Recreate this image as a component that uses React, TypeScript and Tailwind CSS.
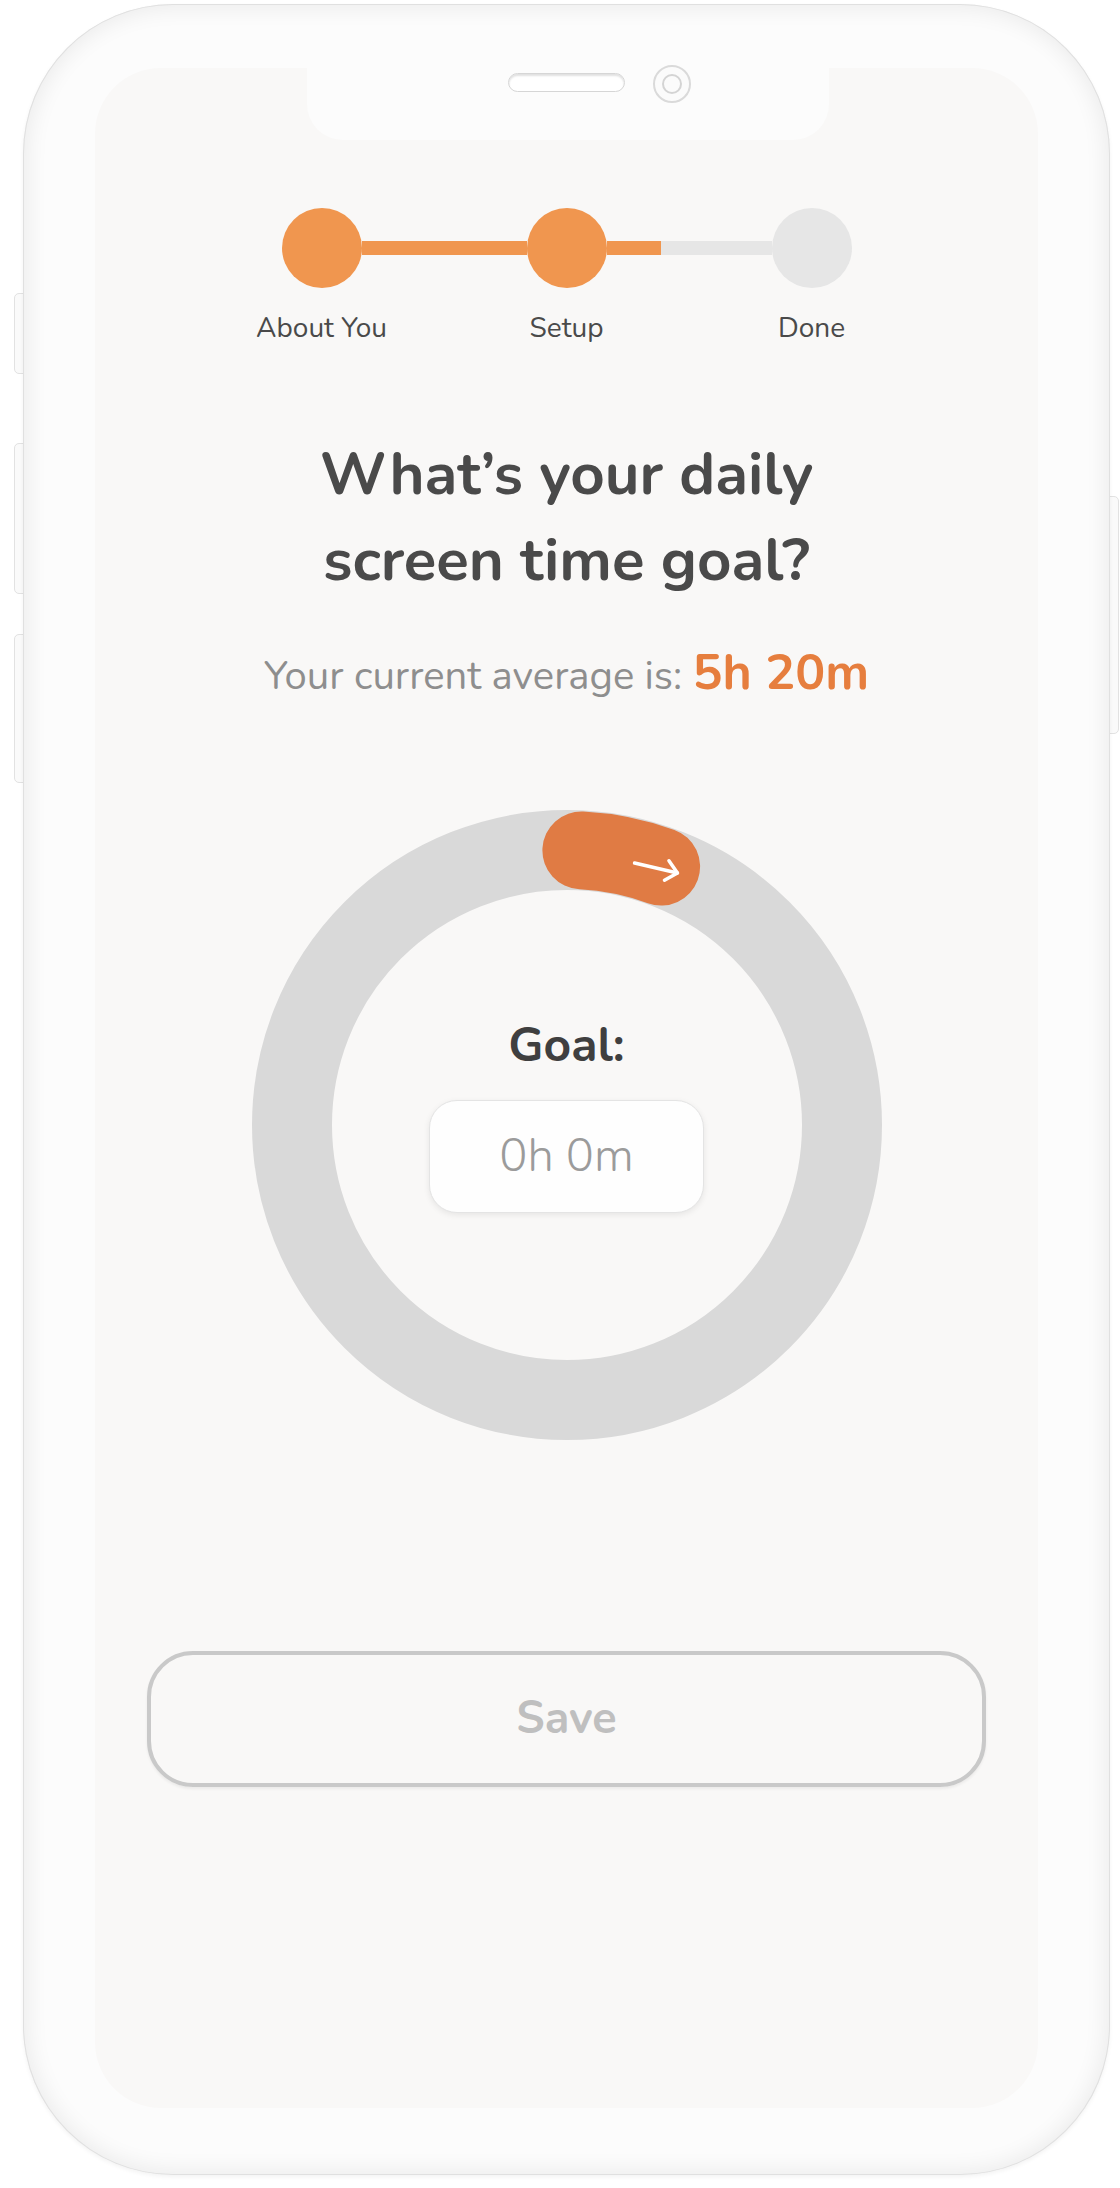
import React from "react";

const FONT = { fontFamily: '"Nunito", "Lato", "Noto Sans", sans-serif' };

function Stepper() {
  return (
    <div className="flex flex-col items-center mt-[140px]">
      <div className="flex items-center w-[570px]">
        <div className="w-[80px] h-[80px] rounded-full bg-[#f0964f] shrink-0" />
        <div className="w-[165px] h-[14px] bg-[#f0964f]" />
        <div className="w-[80px] h-[80px] rounded-full bg-[#f0964f] shrink-0" />
        <div className="w-[54px] h-[14px] bg-[#f0964f]" />
        <div className="w-[111px] h-[14px] bg-[#e6e6e6]" />
        <div className="w-[80px] h-[80px] rounded-full bg-[#e6e6e6] shrink-0" />
      </div>
      <div className="flex w-[570px] mt-[24px] text-[28px] leading-[32px] text-[#4a4a4a]">
        <div className="w-[80px] flex justify-center whitespace-nowrap">About You</div>
        <div className="w-[165px]" />
        <div className="w-[80px] flex justify-center whitespace-nowrap">Setup</div>
        <div className="w-[165px]" />
        <div className="w-[80px] flex justify-center whitespace-nowrap">Done</div>
      </div>
    </div>
  );
}

function Dial() {
  return (
    <div className="relative w-[630px] h-[630px] mt-[106px]">
      <svg className="absolute inset-0" width="630" height="630" viewBox="0 0 630 630">
        <circle cx="315" cy="315" r="275" fill="none" stroke="#d9d9d9" strokeWidth="80" />
        <path
          d="M 329.4 40.4 A 275 275 0 0 1 409.1 56.6"
          fill="none"
          stroke="#e07b44"
          strokeWidth="78"
          strokeLinecap="round"
        />
        <g transform="translate(404 58) rotate(13)" stroke="#ffffff" strokeWidth="3.5" strokeLinecap="round" strokeLinejoin="round" fill="none">
          <line x1="-22" y1="0" x2="22" y2="0" />
          <polyline points="11,-10 22,0 11,10" />
        </g>
      </svg>
      <div className="absolute inset-0 flex flex-col items-center pt-[207px]">
        <div className="text-[48px] leading-[56px] font-bold text-[#3f3f3f]">Goal:</div>
        <div className="mt-[27px] w-[275px] h-[113px] rounded-[28px] bg-[#fefefe] border border-[#e4e4e4] shadow-[0_2px_6px_rgba(0,0,0,0.08)] flex items-center justify-center">
          <span className="text-[47px] font-light text-[#9b9b9b]">0h 0m</span>
        </div>
      </div>
    </div>
  );
}

export default function App() {
  return (
    <div className="w-[1120px] h-[2188px] bg-white relative overflow-hidden" style={FONT}>
      {/* side buttons */}
      <div className="absolute left-[14px] top-[293px] w-[12px] h-[81px] rounded-l-[5px] bg-[#fafafa] border border-[#e2e2e2]" />
      <div className="absolute left-[14px] top-[443px] w-[12px] h-[151px] rounded-l-[5px] bg-[#fafafa] border border-[#e2e2e2]" />
      <div className="absolute left-[14px] top-[634px] w-[12px] h-[149px] rounded-l-[5px] bg-[#fafafa] border border-[#e2e2e2]" />
      <div className="absolute left-[1107px] top-[496px] w-[12px] h-[238px] rounded-r-[5px] bg-[#fafafa] border border-[#e2e2e2]" />

      <div className="pt-[4px] pl-[23px]">
        <div className="relative w-[1087px] h-[2171px] rounded-[150px] bg-[#fcfcfc] pt-[64px] pl-[72px] shadow-[inset_0_0_0_1px_#e0e0e0,inset_0_0_22px_4px_rgba(0,0,0,0.07),0_2px_4px_rgba(0,0,0,0.05)]">
          <div className="relative w-[943px] h-[2040px] rounded-[66px] bg-[#f9f8f7] flex flex-col items-center">
            {/* notch */}
            <div className="absolute left-[212px] top-0 w-[522px] h-[72px] rounded-b-[36px] bg-[#fcfcfc]" />
            <div className="absolute left-[413px] top-[5px] w-[117px] h-[19px] rounded-full bg-white border border-[#d6d6d6] shadow-[inset_0_2px_2px_rgba(0,0,0,0.12)]" />
            <div className="absolute left-[558px] top-[-3px] w-[38px] h-[38px] rounded-full border-[2px] border-[#dadada] bg-[#fbfbfb] flex items-center justify-center">
              <div className="w-[20px] h-[20px] rounded-full border-[2px] border-[#d4d4d4]" />
            </div>

            <div className="relative flex flex-col items-center">
              <Stepper />
              <h1 className="mt-[87px] text-[60px] leading-[86px] font-bold text-[#4a4a4a] text-center">
                What’s your daily
                <br />
                screen time goal?
              </h1>
              <p className="mt-[42px] leading-[56px] text-[40px] text-[#8e8e8e] whitespace-nowrap">
                Your current average is:{" "}
                <span className="text-[50px] font-bold text-[#e67e3e]">5h 20m</span>
              </p>
              <Dial />
              <button className="mt-[211px] w-[839px] h-[136px] rounded-[46px] border-[4px] border-[#c9c9c9] bg-transparent flex items-center justify-center shadow-[0_2px_3px_rgba(0,0,0,0.06)]">
                <span className="text-[45px] font-bold text-[#bfbfbf]">Save</span>
              </button>
            </div>
          </div>
        </div>
      </div>
    </div>
  );
}
